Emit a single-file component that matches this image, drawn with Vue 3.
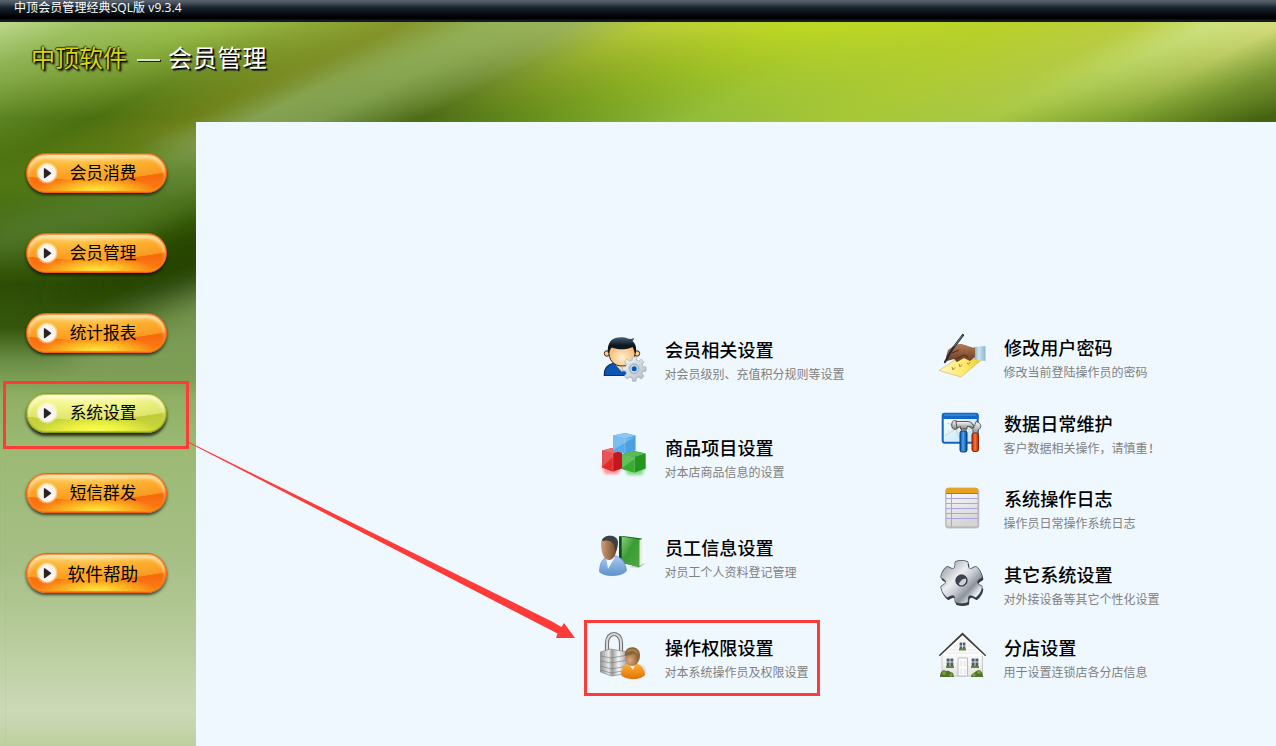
<script setup>
const menu = [
  { label: '会员消费' },
  { label: '会员管理' },
  { label: '统计报表' },
  { label: '系统设置', active: true },
  { label: '短信群发' },
  { label: '软件帮助', large: true }
]
const leftItems = [
  { icon: 'member', title: '会员相关设置', desc: '对会员级别、充值积分规则等设置' },
  { icon: 'cubes', title: '商品项目设置', desc: '对本店商品信息的设置' },
  { icon: 'staff', title: '员工信息设置', desc: '对员工个人资料登记管理' },
  { icon: 'lock', title: '操作权限设置', desc: '对本系统操作员及权限设置', marked: true }
]
const rightItems = [
  { icon: 'pen', title: '修改用户密码', desc: '修改当前登陆操作员的密码' },
  { icon: 'tools', title: '数据日常维护', desc: '客户数据相关操作，请慎重', mark: '!' },
  { icon: 'notes', title: '系统操作日志', desc: '操作员日常操作系统日志' },
  { icon: 'gear', title: '其它系统设置', desc: '对外接设备等其它个性化设置' },
  { icon: 'house', title: '分店设置', desc: '用于设置连锁店各分店信息' }
]
const columns = [
  { side: 'left', items: leftItems },
  { side: 'right', items: rightItems }
]
const iconBox = { staff: '2 0 48 48', pen: '0 -1 48 48', tools: '0 -1 48 48', notes: '0 -1 48 48' }

function gearPath(cx, cy, teeth, outer, inner) {
  const step = (Math.PI * 2) / teeth
  const at = (r, a) => (cx + r * Math.sin(a)).toFixed(2) + ' ' + (cy - r * Math.cos(a)).toFixed(2)
  const parts = []
  for (let i = 0; i < teeth; i++) {
    const a = i * step
    parts.push(at(inner, a - step * 0.3), at(outer, a - step * 0.2), at(outer, a + step * 0.2), at(inner, a + step * 0.3))
  }
  return 'M' + parts.join('L') + 'Z'
}
// Broad teeth joined by concave valleys
function lobedGear(cx, cy, teeth, outer, valley) {
  const step = (Math.PI * 2) / teeth
  const at = (r, a) => (cx + r * Math.sin(a)).toFixed(2) + ' ' + (cy - r * Math.cos(a)).toFixed(2)
  let d = 'M' + at(outer, -step * 0.25)
  for (let i = 0; i < teeth; i++) {
    const a = i * step
    d += 'Q' + at(outer * 1.06, a) + ' ' + at(outer, a + step * 0.25)
    d += 'Q' + at(valley, a + step * 0.5) + ' ' + at(outer, a + step * 0.75)
  }
  return d + 'Z'
}
const smallGear = gearPath(34.2, 34.8, 8, 12, 9)
const bigGear = lobedGear(22.5, 23, 6, 20, 9.5)
</script>

<template>
  <div class="app">
    <svg class="scenery" viewBox="0 0 1276 746" aria-hidden="true">
      <defs>
        <linearGradient id="skyTop" gradientUnits="userSpaceOnUse" x1="0" y1="22" x2="300" y2="622">
          <stop offset="0" stop-color="#bdd789" />
          <stop offset=".06" stop-color="#a0c263" />
          <stop offset=".144" stop-color="#9abd49" />
          <stop offset=".2" stop-color="#8faa39" />
          <stop offset=".27" stop-color="#84942a" />
          <stop offset=".325" stop-color="#93b056" />
          <stop offset=".384" stop-color="#9ab25a" />
          <stop offset=".437" stop-color="#b8cc38" />
          <stop offset=".54" stop-color="#bdd823" />
          <stop offset=".677" stop-color="#b9d12b" />
          <stop offset=".76" stop-color="#bccd42" />
          <stop offset=".81" stop-color="#cce17d" />
          <stop offset=".86" stop-color="#d2da78" />
          <stop offset=".92" stop-color="#8aa743" />
        </linearGradient>
        <linearGradient id="skyBottom" gradientUnits="userSpaceOnUse" x1="0" y1="22" x2="300" y2="622">
          <stop offset=".04" stop-color="#7fa448" />
          <stop offset=".13" stop-color="#5c8322" />
          <stop offset=".19" stop-color="#4b7010" />
          <stop offset=".255" stop-color="#6c8018" />
          <stop offset=".3" stop-color="#84a252" />
          <stop offset=".345" stop-color="#7b9a4a" />
          <stop offset=".41" stop-color="#4c6b16" />
          <stop offset=".5" stop-color="#6e971f" />
          <stop offset=".59" stop-color="#92bc3a" />
          <stop offset=".69" stop-color="#a7c737" />
          <stop offset=".79" stop-color="#a8c844" />
          <stop offset=".87" stop-color="#83a632" />
          <stop offset=".97" stop-color="#456210" />
        </linearGradient>
        <linearGradient id="fadeDown" x1="0" y1="0" x2="0" y2="1">
          <stop offset=".05" stop-color="#000" />
          <stop offset=".95" stop-color="#fff" />
        </linearGradient>
        <linearGradient id="fadeOut" x1="0" y1="0" x2="0" y2="1">
          <stop offset="0" stop-color="#fff" />
          <stop offset=".3" stop-color="#999" />
          <stop offset="1" stop-color="#000" />
        </linearGradient>
        <mask id="lowerHalf" maskUnits="userSpaceOnUse" x="0" y="22" width="1276" height="100">
          <rect x="0" y="22" width="1276" height="100" fill="url(#fadeDown)" />
        </mask>
        <mask id="sideTop" maskUnits="userSpaceOnUse" x="0" y="122" width="196" height="80">
          <rect x="0" y="122" width="196" height="80" fill="url(#fadeOut)" />
        </mask>
        <linearGradient id="sideBase" gradientUnits="userSpaceOnUse" x1="0" y1="122" x2="0" y2="746">
          <stop offset="0" stop-color="#55790f" />
          <stop offset=".1" stop-color="#4e7714" />
          <stop offset=".18" stop-color="#42690f" />
          <stop offset=".26" stop-color="#2d4d05" />
          <stop offset=".33" stop-color="#35560d" />
          <stop offset=".38" stop-color="#688b43" />
          <stop offset=".44" stop-color="#8fb064" />
          <stop offset=".53" stop-color="#9cba75" />
          <stop offset=".7" stop-color="#a6bf85" />
          <stop offset=".83" stop-color="#b8cc9c" />
          <stop offset=".945" stop-color="#ccdab7" />
          <stop offset="1" stop-color="#becf9f" />
        </linearGradient>
        <filter id="soft" x="-50%" y="-50%" width="200%" height="200%"><feGaussianBlur stdDeviation="15" /></filter>
        <clipPath id="sideClip"><rect x="0" y="122" width="196" height="624" /></clipPath>
      </defs>
      <rect x="0" y="122" width="196" height="624" fill="url(#sideBase)" />
      <g clip-path="url(#sideClip)">
        <g filter="url(#soft)">
          <path d="M150 122L230 92V150L160 158Z" fill="#759242" />
          <path d="M150 180L230 145V175L130 218L-20 260V228Z" fill="#5c803a" opacity=".7" />
          <path d="M110 260L220 205V300H40Z" fill="#254500" />
          <path d="M80 340L230 285V375H60Z" fill="#83a35c" opacity=".85" />
        </g>
      </g>
      <rect x="0" y="122" width="196" height="80" fill="url(#skyBottom)" mask="url(#sideTop)" />
      <rect x="0" y="22" width="1276" height="100" fill="url(#skyTop)" />
      <rect x="0" y="22" width="1276" height="100" fill="url(#skyBottom)" mask="url(#lowerHalf)" />
      <path d="M5.500 380V746" stroke="#8cab6c" opacity=".12" />
    </svg>

    <header class="titlebar">中顶会员管理经典SQL版 v9.3.4</header>
    <div class="banner">
      <span class="brand">中顶软件</span>
      <i class="dash"></i>
      <span class="module">会员管理</span>
    </div>
    <div class="body">
      <nav class="sidebar">
        <button v-for="m in menu" :key="m.label" class="pill" :class="{ active: m.active, large: m.large }">
          <svg class="play" viewBox="0 0 22 22">
            <circle cx="11" cy="11" r="10.500" fill="#fff" opacity=".4" />
            <circle cx="11" cy="11" r="9" fill="#fbf5ed" />
            <path d="M8.500 6.800L14.600 11.200L8.500 15.600Z" fill="#262626" stroke="#262626" stroke-width="1.300" stroke-linejoin="round" />
          </svg>
          <span class="pill-label">{{ m.label }}</span>
        </button>
      </nav>

      <main class="content">
        <section v-for="c in columns" :key="c.side" class="column" :class="c.side">
          <article v-for="it in c.items" :key="it.title" class="item" :class="{ marked: it.marked }">
            <svg class="icon" :viewBox="iconBox[it.icon] || '0 0 48 48'">
              <g v-if="it.icon === 'member'">
                <defs>
                  <radialGradient id="mFace" cx=".5" cy=".65" r=".6"><stop offset="0" stop-color="#fff0d0" /><stop offset="1" stop-color="#f5b66c" /></radialGradient>
                  <linearGradient id="mHair" x1="0" y1="0" x2="0" y2="1"><stop offset="0" stop-color="#456074" /><stop offset=".5" stop-color="#0c161d" /></linearGradient>
                  <linearGradient id="mGear" x1="0" y1="0" x2="1" y2="1"><stop offset="0" stop-color="#f8f9fa" /><stop offset="1" stop-color="#b2bac0" /></linearGradient>
                </defs>
                <path d="M4.300 41.500C4 34 7 30.500 14 29H30V41.500Z" fill="#0c55b0" stroke="#062f64" stroke-width="1.200" />
                <path d="M14 29L22 38L28 29Z" fill="#ffd9a2" />
                <circle cx="7" cy="19.500" r="2.700" fill="#ffd095" stroke="#362516" />
                <circle cx="37" cy="19.500" r="2.700" fill="#ffd095" stroke="#362516" />
                <path d="M9 16C9 6 35 6 35 16C36 26 30 32 22 32S8 26 9 16Z" fill="url(#mFace)" stroke="#3c2716" />
                <path d="M8 20C6.500 8 12 2.800 22 3.200C26 3 28 5 31 5L34 4C34 5 33.500 6 32.500 7C36 10 37 15 35.500 20C34 18 34 15 32.500 13C27 16 17 16 12 13.500C10 15 9.500 18 8 20Z" fill="url(#mHair)" />
                <path :d="smallGear" transform="translate(0 1)" fill="#727b82" opacity=".4" />
                <path :d="smallGear" fill="url(#mGear)" stroke="#a8b0b6" stroke-width=".7" />
                <circle cx="34.200" cy="34.800" r="6.200" fill="#c6d3de" />
                <circle cx="34.200" cy="34.800" r="4.600" fill="#c4d8e8" stroke="#8faac0" />
                <circle cx="34.200" cy="34.800" r="2.500" fill="#075aa5" />
              </g>
              <g v-else-if="it.icon === 'cubes'">
                <defs><filter id="cGlow" x="-20%" y="-80%" width="140%" height="260%"><feGaussianBlur stdDeviation="1.800" /></filter></defs>
                <path d="M1 33H22L18 42H5Z" fill="#f66" filter="url(#cGlow)" opacity=".7" />
                <path d="M23 34H46L42 43H28Z" fill="#5c5" filter="url(#cGlow)" opacity=".7" />
                <path d="M2.300 18.500L12 16L22 18.500V36.500L13 39.500L2.300 35.500Z" fill="#c4161c" />
                <path d="M2.300 18.500L13 21.500V39.500L2.300 35.500Z" fill="#e02a2e" />
                <path d="M2.300 18.500L12 16L22 18.500L13 21.500Z" fill="#e86e70" />
                <path d="M2.300 35L13 25V21.500L2.300 18.500Z" fill="#f37e7e" opacity=".5" />
                <path d="M13 3.500L25 1L35.600 3.500V18.500L25 21.500L13 18.500Z" fill="#4b9fe3" />
                <path d="M13 3.500L25 6.500V21.500L13 18.500Z" fill="#58a9e9" />
                <path d="M13 3.500L25 1L35.600 3.500L25 6.500Z" fill="#8cc6f4" />
                <path d="M13 18L35 5L25 6.500L13 3.500Z" fill="#b4ddf8" opacity=".4" />
                <path d="M22.300 22L34 19L45.700 21.500V36.500L35 40.500L22.300 37Z" fill="#24951f" />
                <path d="M22.300 22L34.500 25V40.500L22.300 37Z" fill="#38ad31" />
                <path d="M22.300 22L34 19L45.700 21.500L34.500 25Z" fill="#5abb50" />
                <path d="M22.300 36L34.500 27V25L22.300 22Z" fill="#8bd483" opacity=".5" />
                <path d="M34.500 25V40M13 21.500V39M25 6.500V21" stroke="#fff" stroke-width=".5" opacity=".4" />
              </g>
              <g v-else-if="it.icon === 'staff'">
                <defs>
                  <linearGradient id="sBook" x1="0" y1="0" x2="1" y2="1"><stop offset="0" stop-color="#8fd07d" /><stop offset=".45" stop-color="#3a9b35" /><stop offset="1" stop-color="#4faa42" /></linearGradient>
                  <linearGradient id="sFace"><stop offset="0" stop-color="#d2a078" /><stop offset="1" stop-color="#6c4429" /></linearGradient>
                  <linearGradient id="sCoat" x1="0" y1="0" x2="0" y2="1"><stop offset="0" stop-color="#a9c9ef" /><stop offset="1" stop-color="#5f92ce" /></linearGradient>
                </defs>
                <path d="M30 35L48 31L41 36Z" fill="#748596" opacity=".35" />
                <path d="M21 4.500L25 4L44 6.500V33L41 35L21 30Z" fill="#1f6523" />
                <path d="M41 8L44 7V33L41 34.500Z" fill="#e9ecd9" />
                <path d="M23.500 4.500L41.500 7.500V35L23.500 31Z" fill="url(#sBook)" />
                <path d="M21 4.500L23.500 4.500V31L21 30Z" fill="#0d4b1b" />
                <path d="M1.500 40C1.500 30 5 27 10 24H18C25 26 28 32 28.500 39C23 45 7 45 1.500 40Z" fill="url(#sCoat)" stroke="#5b86b9" stroke-width=".6" />
                <path d="M8 25L10 37L17 25Z" fill="#f4f8fc" />
                <path d="M3 11C3 3 19 4 19 12C19 21 16 28 11 28C5 28 3 19 3 11Z" fill="url(#sFace)" />
                <path d="M4 9C4 3 19 1 20 10C20 14 19 18 17.500 20L16 13C13 8 10 8 4 9Z" fill="#3d4142" />
              </g>
              <g v-else-if="it.icon === 'lock'">
                <defs>
                  <linearGradient id="lBody"><stop offset="0" stop-color="#959595" /><stop offset=".3" stop-color="#e9e9e9" /><stop offset=".42" stop-color="#999" /><stop offset=".65" stop-color="#f5f5f5" /><stop offset="1" stop-color="#999" /></linearGradient>
                  <radialGradient id="lHead" cx=".35" cy=".65" r=".7"><stop offset="0" stop-color="#ddab7b" /><stop offset="1" stop-color="#8a5c36" /></radialGradient>
                  <linearGradient id="lCoat" x1="0" y1="0" x2="0" y2="1"><stop offset="0" stop-color="#ffb33c" /><stop offset="1" stop-color="#e17304" /></linearGradient>
                </defs>
                <path d="M7 21V11C7 -1 21 -1 21 11V22" fill="none" stroke="#747474" stroke-width="4.200" />
                <path d="M7 21V11C7 -1 21 -1 21 11V22" fill="none" stroke="#d9d9d9" stroke-width="2" />
                <path d="M.5 20L10 17L28 20V41L12 44L.5 40Z" fill="url(#lBody)" stroke="#858585" stroke-width=".7" />
                <path d="M.5 24L11 26L28 23M.5 29L11 31L28 28M.5 34L11 37L28 34M.5 38L11 41L28 38" fill="none" stroke="#777" stroke-width="1" opacity=".6" />
                <path d="M40 32C48 34 48 41 43 45Z" fill="#8994a0" opacity=".2" />
                <path d="M21 43C21 36 25 32 30 31H37C42 34 45 38 45 43C40 49 25 48 21 43Z" fill="url(#lCoat)" />
                <path d="M28 31L33 38L36 31Z" fill="#fff0d2" />
                <ellipse cx="32" cy="26" rx="6.800" ry="8" fill="url(#lHead)" />
                <path d="M25 24C23 13 40 12 40 23C40 27 39 29 37 31C38 27 37 24 36 21C32 23 28 23 25 24Z" fill="#8b6636" />
                <path d="M27 20Q33 15 38 21" fill="none" stroke="#c1a06c" stroke-width="1.400" opacity=".55" />
              </g>
              <g v-else-if="it.icon === 'pen'">
                <defs>
                  <linearGradient id="pPaper"><stop offset="0" stop-color="#fff8bd" /><stop offset=".6" stop-color="#ffe967" /><stop offset="1" stop-color="#f2c91e" /></linearGradient>
                  <linearGradient id="pCuff"><stop offset="0" stop-color="#78a0b9" /><stop offset=".45" stop-color="#cce4ee" /><stop offset="1" stop-color="#8cb6ca" /></linearGradient>
                  <linearGradient id="pHand" x1="0" y1="0" x2="0" y2="1"><stop offset="0" stop-color="#b57c54" /><stop offset="1" stop-color="#653824" /></linearGradient>
                </defs>
                <path d="M0 37.500L19 25L43 26.500L22 44Z" fill="url(#pPaper)" stroke="#c8bc73" stroke-width=".7" />
                <path d="M13 34L14 37L16 34.500M20 31L21 34L23 31.500M28 30L29.500 31.500L31 29" fill="none" stroke="#a3894c" />
                <path d="M35 14L46.500 13V28L36 27C34 22 34 18 35 14Z" fill="url(#pCuff)" />
                <path d="M7 24L9 17L16 12C23 9 27 13 36 15V24L31 28L25 25L18 29L15 26L8 28Z" fill="url(#pHand)" />
                <path d="M13 20L20 17M17 26L25 22L29 24" fill="none" stroke="#4d281b" />
                <path d="M24 2L14 15L6 29" fill="none" stroke="#202b35" stroke-width="2.200" stroke-linecap="round" />
                <path d="M23.500 2.500L15 13.500" stroke="#8695a3" stroke-width=".8" />
              </g>
              <g v-else-if="it.icon === 'tools'">
                <defs>
                  <linearGradient id="tWin" x1="0" y1="0" x2="1" y2="1"><stop offset="0" stop-color="#fff" /><stop offset="1" stop-color="#b9e1f8" /></linearGradient>
                  <linearGradient id="tMetal" x1="0" y1="0" x2="0" y2="1"><stop offset="0" stop-color="#fafafa" /><stop offset="1" stop-color="#858585" /></linearGradient>
                  <linearGradient id="tBlue"><stop offset="0" stop-color="#084d9c" /><stop offset=".45" stop-color="#45a6fa" /><stop offset="1" stop-color="#073c83" /></linearGradient>
                  <linearGradient id="tRed"><stop offset="0" stop-color="#bb2b02" /><stop offset=".5" stop-color="#ff743c" /><stop offset="1" stop-color="#a92401" /></linearGradient>
                </defs>
                <rect x="3.700" y="4.700" width="35" height="29" rx="2" fill="url(#tWin)" stroke="#1264bf" stroke-width="2" />
                <path d="M3 10V6Q3 4 5 4H37Q39.500 4 39.500 6V10Z" fill="#1267c8" />
                <path d="M5 6H37" stroke="#4f9fe6" />
                <path d="M8 14L16 17L20 29M6 27L15 21L19 18" fill="none" stroke="#accc95" opacity=".6" />
                <path d="M34 25V20C29 19 30 15 31 13L35.500 17L37 12.500C43 14 43 19 39 21V26Z" fill="url(#tMetal)" stroke="#555" stroke-width=".9" />
                <rect x="33" y="24" width="6.500" height="18.500" rx="2" fill="url(#tRed)" stroke="#882104" />
                <path d="M22.500 18H27V27H22.500Z" fill="#bbb" stroke="#666" stroke-width=".9" />
                <ellipse cx="16" cy="16" rx="3.300" ry="4.300" fill="url(#tMetal)" stroke="#484848" stroke-width=".9" />
                <path d="M17 12.500H29Q34 13 35 19Q31 17 28 17.500V20H21.500V17.500L18 19Z" fill="url(#tMetal)" stroke="#484848" stroke-width=".9" />
                <rect x="21" y="22" width="7" height="21" rx="2" fill="url(#tBlue)" stroke="#083f7f" />
              </g>
              <g v-else-if="it.icon === 'notes'">
                <defs><linearGradient id="nPaper" x1="0" y1="0" x2=".3" y2="1"><stop offset="0" stop-color="#fff" /><stop offset="1" stop-color="#d5d5d5" /></linearGradient></defs>
                <rect x="6.300" y="4.500" width="34" height="40" rx="3" fill="#58636c" opacity=".35" />
                <rect x="7" y="4" width="32" height="39" rx="2.500" fill="url(#nPaper)" stroke="#aaa" stroke-width=".8" />
                <path d="M6.800 10V6Q7 4 9 4H37Q39 4 39.200 6V10Z" fill="#e6a321" />
                <path d="M7 9.500H39" stroke="#b8780d" />
                <path d="M7 14.500H39M7 19.500H39M7 24.500H39M7 29.500H39M7 34.500H39" stroke="#aaa2ea" />
                <path d="M12.500 10V43" stroke="#e49393" />
              </g>
              <g v-else-if="it.icon === 'gear'">
                <defs><linearGradient id="gFace" x1="0" y1="0" x2="1" y2="1"><stop offset=".1" stop-color="#a6abb3" /><stop offset=".38" stop-color="#eceef1" /><stop offset=".52" stop-color="#ccd0d6" /><stop offset=".7" stop-color="#8b939d" /><stop offset=".85" stop-color="#eef0f2" /><stop offset="1" stop-color="#9aa1a9" /></linearGradient></defs>
                <path :d="bigGear" transform="translate(1 2.300)" fill="#353b44" stroke="#353b44" stroke-width="3" stroke-linejoin="round" />
                <path :d="bigGear" fill="#4b515a" stroke="#4b515a" stroke-width="3.600" stroke-linejoin="round" />
                <path :d="bigGear" fill="url(#gFace)" stroke="url(#gFace)" stroke-width="2.200" stroke-linejoin="round" />
                <circle cx="22.500" cy="21.500" r="5.600" fill="#3c4550" stroke="#20262c" />
                <path d="M19.500 25L23 20.500L27 19.500Q28 23 25 25.500Q22 27.500 19.500 25Z" fill="#cbd3dc" />
              </g>
              <g v-else>
                <defs><linearGradient id="hWall" x1="0" y1="0" x2="0" y2="1"><stop offset="0" stop-color="#eee" /><stop offset=".55" stop-color="#fff" /><stop offset="1" stop-color="#e4e4e4" /></linearGradient></defs>
                <path d="M3 23L23.500 3L43.500 23V44H3Z" fill="url(#hWall)" stroke="#b4b4b4" stroke-width=".7" />
                <path d="M3 25H43.500M3 28H43M3 31H43M3 34H43M3 37H43M3 40H43M14 14H33M10 18H37M7 21H40" stroke="#dedede" stroke-width=".6" />
                <path d="M.5 24L23.500 2L46.500 24" fill="none" stroke="#403e3d" stroke-width="2.200" />
                <path d="M1 25L23.500 4.300L46 25" fill="none" stroke="#fff" stroke-width="1.500" />
                <path d="M20 10H27V18H20ZM7 26H15V35H7ZM32 26H40V35H32Z" fill="#4e5d68" stroke="#fff" stroke-width="1.200" />
                <path d="M23.500 10V18M20 14H27M11 26V35M7 30H15M36 26V35M32 30H40" stroke="#f5f5f5" stroke-width=".8" />
                <path d="M19 26H28.500V44H19Z" fill="#fff" stroke="#bbb" />
                <path d="M21 29H23V34H21ZM25 29H27V34H25ZM21 37H23V42H21ZM25 37H27V42H25Z" fill="#f4f4f4" stroke="#ddd" stroke-width=".5" />
                <path d="M7 35H15M32 35H40M20 17.500H27" stroke="#61833c" stroke-width="2" />
                <path d="M1 45C1 40 4 37 7 39C11 38 11 41 14 41L15 45ZM32 45C32 42 35 41 36 40C40 36 44 39 44 45Z" fill="#527428" />
                <circle cx="5" cy="41" r="2" fill="#789a45" /><circle cx="12" cy="43" r="1.600" fill="#7ba04a" />
                <circle cx="40" cy="40" r="2" fill="#789a45" /><circle cx="35" cy="43" r="1.600" fill="#7ba04a" />
              </g>
            </svg>
            <div class="text">
              <h2>{{ it.title }}</h2>
              <p>{{ it.desc }}<b v-if="it.mark">{{ it.mark }}</b></p>
            </div>
          </article>
        </section>
      </main>
    </div>

    <svg class="arrow" viewBox="0 0 1276 746" aria-hidden="true">
      <path d="M189 442L190 443.500L557.500 633.500L556 638L575 638L564 623L561.500 627L552 621.500Z" fill="#ff3b39" />
    </svg>
  </div>
</template>

<style>
body { overflow: hidden; }
</style>

<style scoped>
.app {
  position: relative;
  display: flex;
  flex-direction: column;
  width: 1276px;
  height: 746px;
  overflow: hidden;
  font-family: "Noto Sans CJK SC", "Noto Sans", sans-serif;
  color: #000;
}
.scenery, .arrow { position: absolute; left: 0; top: 0; width: 1276px; height: 746px; pointer-events: none; }
.titlebar {
  position: relative;
  box-sizing: border-box;
  height: 22px;
  padding-left: 14px;
  background: linear-gradient(#59646e 0, #46515b 3px, #1b2832 7px, #0e171f 11px, #000 17px, #000 19px, #141a28 20px, #141a28 22px);
  color: #fff;
  font-family: "Open Sans", "Noto Sans CJK SC", sans-serif;
  font-size: 12px;
  line-height: 15px;
  letter-spacing: .08px;
}
.banner { position: relative; display: flex; height: 100px; padding-left: 31px; box-sizing: border-box; }
.brand, .module { font-size: 24px; line-height: 32px; margin-top: 19px; white-space: nowrap; }
.brand { color: #d9d416; width: 96px; text-shadow: 1px 1px 1px #000, 2px 2px 2px #111, -1px 0 1px #303800, 0 -1px 1px #303800; }
.dash { width: 23px; height: 2px; margin: 37px 9px 0 10px; background: #ddd; box-shadow: 1px 1px #222; }
.module { color: #fff; letter-spacing: .8px; margin-left: -1px; text-shadow: 1px 1px #000, 2px 2px 1px #222; }
.body { position: relative; display: flex; height: 624px; }
.sidebar { width: 196px; box-sizing: border-box; padding: 31px 0 0 26px; display: flex; flex-direction: column; gap: 40px; }
.pill {
  display: flex;
  align-items: center;
  width: 141px;
  height: 40px;
  flex: none;
  box-sizing: border-box;
  border: 1px solid #ed6208;
  border-radius: 20px;
  padding: 0 0 0 9px;
  color: #000;
  font-family: inherit;
  font-size: 16.700px;
  background:
    radial-gradient(ellipse 60px 17px at 50% 100%, #fff34a 0, rgba(255, 215, 46, .75) 45%, rgba(255, 170, 20, 0) 100%),
    radial-gradient(ellipse 118px 26px at 40% 0, #ffd87c 0, #fdb838 45%, #fa9a20 98%, rgba(250, 140, 20, 0) 100%),
    linear-gradient(#fb9820 0, #f76a0c 55%, #fb8012 100%);
  box-shadow: 0 2px 3px rgba(0, 0, 0, .65), inset 0 0 1px 1px rgba(255, 112, 10, .75), inset 0 4px 4px rgba(255, 250, 222, .85), inset 0 -1px 1px #ffb32e;
}
.pill.active {
  border-color: #8c9a10;
  background:
    radial-gradient(ellipse 60px 17px at 50% 100%, #ffff5a 0, rgba(247, 250, 65, .8) 45%, rgba(220, 232, 54, 0) 100%),
    radial-gradient(ellipse 118px 26px at 40% 0, #fdfdbd 0, #f3f68c 45%, #dde56a 98%, rgba(210, 222, 70, 0) 100%),
    linear-gradient(#e0e879 0, #bfcc38 55%, #ced93c 100%);
  box-shadow: 0 3px 3px rgba(0, 0, 0, .75), inset 0 0 1px 1px rgba(165, 178, 30, .7), inset 0 4px 4px rgba(255, 255, 235, .9), inset 0 -1px 1px #dbe438;
  position: relative;
}
.pill.active::after { content: ""; position: absolute; left: -24px; top: -13px; width: 180px; height: 62px; border: 3px solid #ff3b39; }
.play { width: 22px; height: 22px; flex: none; }
.pill-label { margin: -3px 0 0 11.700px; line-height: 24px; white-space: nowrap; }
.pill.large .pill-label { margin-top: -1px; margin-left: 9.500px; font-size: 17.700px; }
.content { width: 1080px; box-sizing: border-box; background: #f0f8ff; display: flex; padding-left: 404px; }
.column { display: grid; align-content: start; width: 339px; flex: none; }
.column.left { padding-top: 212px; grid-template-rows: 98px 100px 100px 60px; }
.column.right { padding-top: 210px; grid-template-rows: 76px 75px 76px 73px 60px; }
.item { display: flex; height: 48px; position: relative; }
.item.marked::after { content: ""; position: absolute; left: -16px; top: -12px; width: 230px; height: 70px; border: 3px solid #ff3b39; }
.icon { width: 48px; height: 48px; flex: none; overflow: visible; }
.text { padding: 3px 0 0 16px; white-space: nowrap; }
h2 { margin: 0 0 0 1px; font-size: 18.100px; line-height: 24px; font-weight: 500; }
p { margin: 3px 0 0 .5px; font-size: 12px; line-height: 20px; color: #808080; }
p b { margin-left: 1.500px; font-weight: 500; }
</style>
